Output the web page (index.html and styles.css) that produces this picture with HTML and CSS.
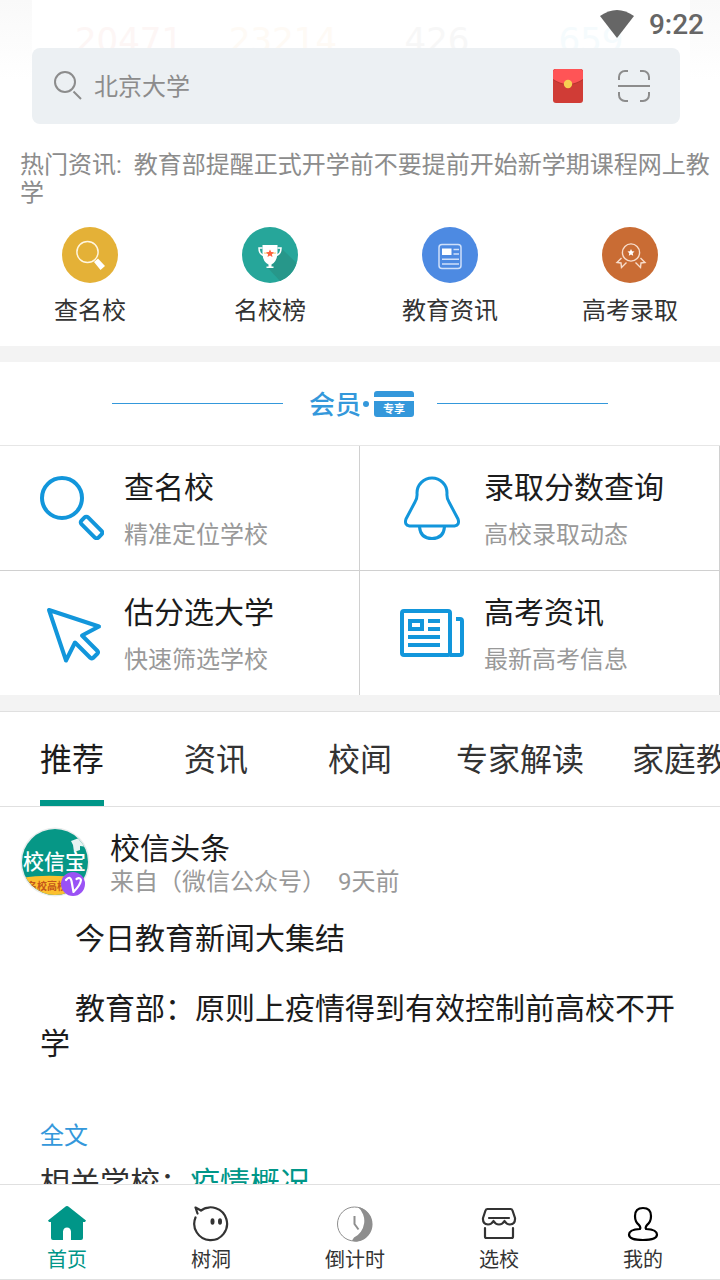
FILE: index.html
```html
<!DOCTYPE html>
<html lang="zh-CN">
<head>
<meta charset="utf-8">
<meta name="viewport" content="width=device-width, initial-scale=1">
<title>校信宝</title>
<link rel="stylesheet" href="styles.css">
</head>
<body>
<div class="app">
  <header class="top">
    <div class="ghost" aria-hidden="true">
      <span class="ghost-red">20471</span>
      <span class="ghost-amber">23214</span>
      <span class="ghost-gray">426</span>
      <span class="ghost-blue">659</span>
    </div>
    <div class="status">
      <svg width="36" height="28" viewBox="0 0 36 28"><path d="M1 6Q18-6 35 6L18 28Z" fill="#666"/></svg>
      <time class="clock">9:22</time>
    </div>
    <form class="search">
      <label class="search-icon" for="q" aria-label="搜索">
        <svg width="30" height="30" viewBox="0 0 30 30" fill="none" stroke="#8c8c8c" stroke-width="2"><circle cx="11" cy="11" r="10"/><path d="M19.500 20.500L27 28"/></svg>
      </label>
      <input class="search-input" id="q" type="text" placeholder="北京大学">
      <button class="icon-button" type="button" aria-label="红包">
        <svg width="30" height="36" viewBox="0 0 30 36"><rect y="1" width="30" height="34" rx="3" fill="#d03c36"/><path d="M0 12V4a3 3 0 0 1 3-3h24a3 3 0 0 1 3 3v8Q15 22 0 12Z" fill="#b9352f"/><path d="M0 11V4a3 3 0 0 1 3-3h24a3 3 0 0 1 3 3v7Q15 21 0 11Z" fill="#ff5456"/><circle cx="15" cy="16" r="4.200" fill="#f7cf52"/></svg>
      </button>
      <button class="icon-button" type="button" aria-label="扫一扫">
        <svg width="32" height="32" viewBox="0 0 32 32" fill="none" stroke="#8c8c8c" stroke-width="2"><path d="M1 10V7a6 6 0 0 1 6-6h3M22 1h3a6 6 0 0 1 6 6v3M31 22v3a6 6 0 0 1-6 6h-3M10 31H7a6 6 0 0 1-6-6v-3M0 16h32"/></svg>
      </button>
    </form>
  </header>

  <main class="content">
    <p class="hot">热门资讯:&nbsp; 教育部提醒正式开学前不要提前开始新学期课程网上教学</p>

    <nav class="quick" aria-label="快捷入口">
      <a class="quick-item" href="#search">
        <svg width="56" height="56" viewBox="0 0 56 56"><circle cx="28" cy="28" r="28" fill="#e4b137"/><circle cx="25.500" cy="25" r="10.600" fill="none" stroke="#fff6df" stroke-width="1.500"/><path d="M32 35l4-3.500 7 7.500-4.500 4Z" fill="#fff"/></svg>
        <span>查名校</span>
      </a>
      <a class="quick-item" href="#rank">
        <svg width="56" height="56" viewBox="0 0 56 56"><circle cx="28" cy="28" r="28" fill="#26a69a"/><path d="M40 22L54.500 36A28 28 0 0 1 38 54L25 40Z" fill="#27978a"/><path d="M20.500 18h15v9q-1 8-6 10.500v2H31.500V41h-7v-1.500h2v-2Q21 35 20.500 27Z" fill="#fff"/><path d="M20.500 21H17q0 6 4.500 7.500M35.500 21H39q0 6-4.500 7.500" fill="none" stroke="#fff" stroke-width="1.500"/><path d="M22 26l6 .5 6-.5" stroke="#f6c86a" fill="none"/><path d="M28 22.500l1.200 2.500 2.800.3-2.100 1.900.6 2.800-2.500-1.400-2.500 1.400.6-2.800-2.100-1.900 2.800-.3Z" fill="#ff6240"/></svg>
        <span>名校榜</span>
      </a>
      <a class="quick-item" href="#news">
        <svg width="56" height="56" viewBox="0 0 56 56"><circle cx="28" cy="28" r="28" fill="#4d8ae2"/><g fill="none" stroke="#cfe0fa" stroke-width="1.500"><rect x="17" y="17.500" width="22" height="24" rx="3"/><path d="M31.500 22.500H37M31.500 27H37M20 32.300h17M20 37h17"/></g><path d="M20 21.500h9.500v6.500h-9.500Z" fill="#fff"/></svg>
        <span>教育资讯</span>
      </a>
      <a class="quick-item" href="#admission">
        <svg width="56" height="56" viewBox="0 0 56 56"><circle cx="28" cy="28" r="28" fill="#c96c34"/><g fill="none" stroke="#f7dccb" stroke-width="1.400"><circle cx="29" cy="25.500" r="8.600"/><path d="M19.500 31l-4.500 4.500 4 .5.500 4.500 5-5M38.500 31l4.500 4.500-4 .5-.5 4.500-5-5"/></g><path d="M29 22l1.100 2.300 2.400.3-1.800 1.700.5 2.500-2.200-1.300-2.200 1.300.5-2.500-1.800-1.700 2.400-.3Z" fill="#fff"/></svg>
        <span>高考录取</span>
      </a>
    </nav>

    <section class="member">
      <h2 class="member-title">
        <span class="member-text">会员</span>
        <span class="member-dot"></span>
        <span class="member-card">专享</span>
      </h2>
      <div class="tiles">
        <a class="tile" href="#t1">
          <svg width="64" height="64" viewBox="0 0 64 64" fill="none" stroke="#1296db" stroke-width="4"><circle cx="22" cy="22" r="20"/><rect x="-12" y="-4.700" width="24" height="9.400" rx="2.500" transform="translate(51.500 51.500) rotate(45)"/></svg>
          <span class="tile-text"><span class="tile-name">查名校</span><span class="tile-note">精准定位学校</span></span>
        </a>
        <a class="tile" href="#t2">
          <svg width="64" height="64" viewBox="0 0 64 64" fill="none" stroke="#1296db" stroke-width="3" stroke-linejoin="round"><path d="M17 17a15 15 0 0 1 30 0q-.5 5 2 9l9 17q2 6-3.500 7h-45Q4 49 6 43l9-17q2.500-4 2-9ZM19.500 51q1 11.500 12.500 11.500T44.500 51"/></svg>
          <span class="tile-text"><span class="tile-name">录取分数查询</span><span class="tile-note">高校录取动态</span></span>
        </a>
        <a class="tile" href="#t3">
          <svg width="64" height="64" viewBox="0 0 64 64" fill="none" stroke="#1296db" stroke-width="4" stroke-linejoin="round"><path d="M9 9L59 25.500 42 34.500 57.500 50a2 2 0 0 1 0 2.500l-4.500 4.500a2 2 0 0 1-2.500 0L35 41.500 26 59.500Z"/></svg>
          <span class="tile-text"><span class="tile-name">估分选大学</span><span class="tile-note">快速筛选学校</span></span>
        </a>
        <a class="tile" href="#t4">
          <svg width="64" height="64" viewBox="0 0 64 64" fill="none" stroke="#1296db" stroke-width="4"><rect x="2" y="10" width="48" height="44" rx="2"/><path d="M50 54h10a2 2 0 0 0 2-2V20a2 2 0 0 0-2-2h-4M28 20h12M28 28h12M8 36h32M8 44h32M10 20h12v8H10Z"/></svg>
          <span class="tile-text"><span class="tile-name">高考资讯</span><span class="tile-note">最新高考信息</span></span>
        </a>
      </div>
    </section>

    <nav class="tabs" aria-label="频道">
      <a class="tab tab-active" href="#tab1"><span>推荐</span></a>
      <a class="tab" href="#tab2"><span>资讯</span></a>
      <a class="tab" href="#tab3"><span>校闻</span></a>
      <a class="tab" href="#tab4"><span>专家解读</span></a>
      <a class="tab" href="#tab5"><span>家庭教育</span></a>
    </nav>

    <article class="post">
      <div class="author">
        <svg class="avatar" width="70" height="70" viewBox="0 0 70 70">
          <defs><clipPath id="disc"><circle cx="35" cy="35" r="33"/></clipPath></defs>
          <circle cx="35" cy="35" r="34.500" fill="#e9ecec"/>
          <g clip-path="url(#disc)">
            <path d="M0 0h70v70H0Z" fill="#069786"/>
            <path d="M0 51Q30 46 70 52V70H0Z" fill="#fcc02f"/>
            <path d="M51 14l8-3 10 4-1 5-8-1v4l-6 2-1-7Z" fill="#e6f4f2"/>
            <text class="avatar-name" x="3" y="42">校信宝</text>
            <text class="avatar-note" x="7" y="63">名校高校宝</text>
          </g>
          <circle cx="53" cy="57" r="12" fill="#9a52f5"/>
          <path d="M46 53q4-5 5.500 1l2 11q7-7 7.500-12-1-3-4.500-1" fill="none" stroke="#fff" stroke-width="2.200" stroke-linecap="round" stroke-linejoin="round"/>
        </svg>
        <div class="author-text">
          <h3 class="author-name">校信头条</h3>
          <p class="author-note"><span>来自（微信公众号）</span><span>9天前</span></p>
        </div>
      </div>
      <div class="post-body">
        <p class="para">今日教育新闻大集结</p>
        <p class="para">教育部：原则上疫情得到有效控制前高校不开学</p>
        <a class="more" href="#full">全文</a>
        <p class="related">相关学校：<a class="related-link" href="#school">疫情概况</a></p>
      </div>
    </article>
  </main>

  <nav class="bottom" aria-label="主导航">
    <a class="bottom-item bottom-active" href="#home">
      <svg width="38" height="36" viewBox="0 0 38 36"><path d="M19 0q1 0 2 1l17 13.500-1 1.500h-2V32q0 2-2 2H23v-8.500q-.5-4-4-4t-4 4V34H5q-2 0-2-2V16H1L0 14.500 17 1q1-1 2-1Z" fill="#009688"/></svg>
      <span>首页</span>
    </a>
    <a class="bottom-item" href="#tree">
      <svg width="38" height="36" viewBox="0 0 38 36" fill="none" stroke="#333" stroke-width="2.200" stroke-linecap="round" stroke-linejoin="round"><path d="M9 4.500a16.400 16.400 0 1 1-5.500 7M5.500 7.500L3.500 1.500 9 4.500q4-3 8-2.800"/><g fill="#333" stroke="none"><ellipse cx="20.500" cy="15.500" rx="2" ry="3.300"/><ellipse cx="28" cy="15.500" rx="2" ry="3.300"/></g></svg>
      <span>树洞</span>
    </a>
    <a class="bottom-item" href="#countdown">
      <svg width="38" height="36" viewBox="0 0 38 36"><path d="M22 1a17.500 17.500 0 0 1 0 34.500q-4 .5-6-1l2-3A18.500 18.500 0 0 0 22 1Z" fill="#8e8e8e"/><circle cx="18.500" cy="18" r="17" fill="none" stroke="#8e8e8e"/><path d="M18.500 10v8l4 5.500" fill="none" stroke="#8e8e8e" stroke-width="2"/></svg>
      <span>倒计时</span>
    </a>
    <a class="bottom-item" href="#choose">
      <svg width="38" height="36" viewBox="0 0 38 36" fill="none" stroke="#333" stroke-width="2.200" stroke-linecap="round" stroke-linejoin="round"><path d="M7.500 3h23q1.500 0 2 1.500L35 12q.5 6-5 6.500-3.500 0-5.500-3.500-2 3.500-5.500 3.500T13.500 15q-2 3.500-5.500 3.500Q2.500 18 3 12L5.500 4.500Q6 3 7.500 3ZM9 12h20M5 22v8.500q0 1.500 1.500 1.500h25q1.500 0 1.500-1.500V22"/></svg>
      <span>选校</span>
    </a>
    <a class="bottom-item" href="#me">
      <svg width="38" height="36" viewBox="0 0 38 36" fill="none" stroke="#000" stroke-width="2.200" stroke-linecap="round"><path d="M16 23q1-1.500-1-4-4-3-4-9 0-8 8-8t8 8q0 6-4 9-2 2.500-1 4 11 .5 11 5.500 0 5.500-14 5.500T5 28.500Q5 23.500 16 23Z"/></svg>
      <span>我的</span>
    </a>
  </nav>
</div>
</body>
</html>
```

FILE: styles.css
```css
* {
  box-sizing: border-box;
}

body,
h2,
h3,
p {
  margin: 0;
}

body {
  font-family: Roboto, "Noto Sans CJK SC", sans-serif;
  font-size: 24px;
  color: #333;
  background: #fff;
}

a {
  color: inherit;
  text-decoration: none;
}

svg {
  display: block;
  flex: none;
}

.app {
  display: flex;
  flex-direction: column;
  height: 100vh;
  overflow: hidden;
}

/* Header */
.top {
  position: relative;
  flex: none;
  padding: 0 40px 27px 32px;
  background:
    linear-gradient(#f9f9f9, #fff) left top / 32px 80px no-repeat,
    linear-gradient(#f9f9f9, #fff) right top / 30px 80px no-repeat;
}

.ghost {
  position: absolute;
  top: 20px;
  left: 0;
  right: 0;
  display: grid;
  grid-template-columns: repeat(4, 1fr);
  padding: 0 52px;
  font-family: "DejaVu Sans", sans-serif;
  font-size: 34px;
  line-height: 40px;
  text-align: center;
}

.ghost-red { color: #fdf6f5; }
.ghost-amber { color: #fefaf5; }
.ghost-gray { color: #f7f7f7; }
.ghost-blue { color: #f5fbfd; }

.status {
  position: relative;
  display: flex;
  justify-content: flex-end;
  align-items: center;
  gap: 14px;
  height: 48px;
  margin-right: -24px;
}

.clock {
  padding-top: 2px;
  color: #666;
  font-size: 28px;
  font-weight: 500;
  line-height: 46px;
}

.search {
  position: relative;
  display: flex;
  align-items: center;
  height: 76px;
  padding: 0 30px 0 22px;
  border-radius: 8px;
  background: #ecf0f3;
}

.search-input {
  flex: 1;
  min-width: 0;
  padding: 2px 10px 0;
  border: 0;
  background: none;
  font: inherit;
  line-height: 36px;
  outline: none;
}

.search-input::placeholder {
  color: #8c8c8c;
  opacity: 1;
}

.icon-button {
  margin-left: 35px;
  padding: 0;
  border: 0;
  background: none;
}

/* Scrolling content */
.content {
  flex: 1;
  min-height: 0;
  overflow: hidden;
}

.hot {
  padding: 0 8px 0 20px;
  color: #8c8c8c;
  line-height: 28px;
}

.quick {
  display: grid;
  grid-template-columns: repeat(4, 1fr);
  padding: 20px 0 17px;
  border-bottom: 16px solid #f3f3f3;
}

.quick-item {
  display: flex;
  flex-direction: column;
  align-items: center;
  gap: 10px;
  line-height: 36px;
}

.member-title {
  display: flex;
  align-items: center;
  height: 84px;
  padding: 0 112px;
  border-bottom: 1px solid #e6e6e6;
  color: #3498db;
}

.member-title::before,
.member-title::after {
  content: "";
  flex: 1;
  height: 1px;
  background: #3498db;
}

.member-text {
  margin-left: 26px;
  padding-top: 2px;
  font-size: 26px;
  font-weight: 500;
  line-height: 36px;
}

.member-dot {
  width: 6px;
  height: 6px;
  margin: 0 5px 0 2px;
  border-radius: 50%;
  background: #3498db;
}

.member-card {
  width: 40px;
  height: 26px;
  margin-right: 23px;
  padding-top: 11px;
  border-radius: 3px;
  background: linear-gradient(#3498db 6px, #fff 6px, #fff 10px, #3498db 10px);
  color: #fff;
  font-size: 11px;
  line-height: 16px;
  text-align: center;
}

.tiles {
  display: grid;
  grid-template-columns: 1fr 1fr;
  border-bottom: 16px solid #f3f3f3;
}

.tile {
  display: flex;
  align-items: flex-start;
  gap: 20px;
  padding: 30px 0 0 40px;
  border-right: 1px solid #d0d0d0;
}

.tile:nth-child(-n + 2) {
  border-bottom: 1px solid #d0d0d0;
}

.tile-text {
  display: flex;
  flex-direction: column;
  gap: 8px;
  margin-top: -9px;
  padding-bottom: 17px;
}

.tile-name {
  color: #1c1c1c;
  font-size: 30px;
  line-height: 42px;
}

.tile-note {
  color: #999;
  line-height: 36px;
}

.tabs {
  display: flex;
  overflow: hidden;
  border-top: 1px solid #e0e0e0;
  border-bottom: 1px solid #e0e0e0;
}

.tab {
  display: flex;
  flex: none;
  justify-content: center;
  min-width: 144px;
  padding: 0 24px;
  font-size: 32px;
  line-height: 80px;
}

.tab span {
  padding-top: 8px;
  border-bottom: 6px solid transparent;
}

.tab-active {
  color: #1c1c1c;
}

.tab-active span {
  border-bottom-color: #009688;
}

/* Feed */
.author {
  display: flex;
  gap: 20px;
  padding: 20px 20px 0;
}

.author-text {
  padding-top: 1px;
}

.avatar-name {
  fill: #fff;
  font-size: 21px;
  font-weight: 500;
}

.avatar-note {
  fill: #c4561a;
  font-size: 10px;
  font-weight: 700;
}

.author-name {
  color: #1c1c1c;
  font-size: 30px;
  font-weight: 400;
  line-height: 42px;
}

.author-note {
  display: flex;
  gap: 12px;
  color: #999;
  line-height: 24px;
}

.post-body {
  padding: 24px 40px 0;
}

.para {
  margin-bottom: 35px;
  color: #1c1c1c;
  font-size: 30px;
  line-height: 35px;
  text-indent: 35px;
}

.more {
  display: block;
  padding-top: 22px;
  color: #3498db;
  line-height: 36px;
}

.related {
  padding-top: 8px;
  font-size: 30px;
  line-height: 42px;
}

.related-link {
  color: #009688;
}

/* Bottom bar */
.bottom {
  display: grid;
  flex: none;
  grid-template-columns: repeat(5, 1fr);
  padding: 21px 0 4px;
  border-top: 1px solid #e0e0e0;
  border-bottom: 1px solid #e0e0e0;
  background: #fff;
}

.bottom-item {
  display: flex;
  flex-direction: column;
  align-items: center;
  gap: 3px;
  padding-right: 10px;
  font-size: 20px;
  line-height: 30px;
}

.bottom-active {
  color: #009688;
}
```
